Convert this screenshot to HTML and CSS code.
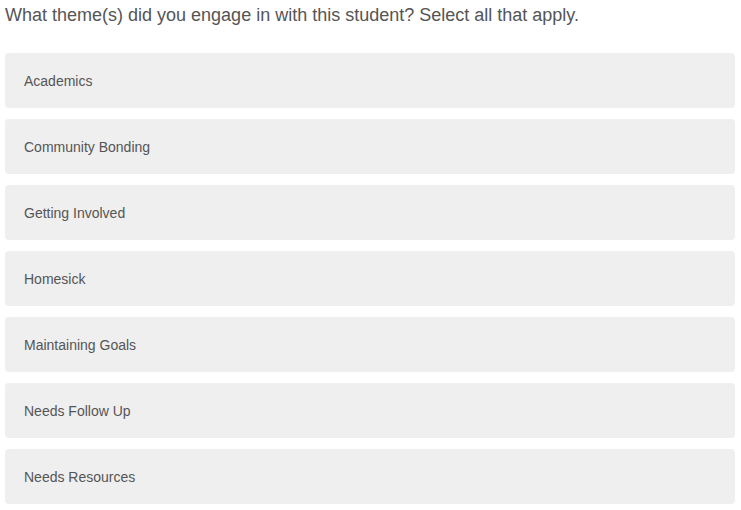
FILE: index.html
```html
<!DOCTYPE html>
<html>
<head>
<meta charset="utf-8">
<link rel="stylesheet" href="styles.css">
</head>
<body>
<div class="question">
  <div class="prompt">What theme(s) did you engage in with this student? Select all that apply.</div>
  <div class="options">
    <div class="option">Academics</div>
    <div class="option">Community Bonding</div>
    <div class="option">Getting Involved</div>
    <div class="option">Homesick</div>
    <div class="option">Maintaining Goals</div>
    <div class="option">Needs Follow Up</div>
    <div class="option">Needs Resources</div>
  </div>
</div>
</body>
</html>
```
FILE: styles.css
```css
html, body {
  margin: 0;
  padding: 0;
  background: #ffffff;
}
.question {
  padding: 0 6px 0 5px;
  font-family: "Liberation Sans", Arial, sans-serif;
}
.prompt {
  font-size: 18px;
  line-height: 28px;
  color: #555555;
  padding-top: 1px;
}
.options {
  display: flex;
  flex-direction: column;
  gap: 11px;
  margin-top: 24px;
}
.option {
  height: 55px;
  display: flex;
  align-items: center;
  padding-left: 19px;
  background: #efefef;
  border-radius: 4px;
  font-size: 14px;
  color: #555555;
}
```
